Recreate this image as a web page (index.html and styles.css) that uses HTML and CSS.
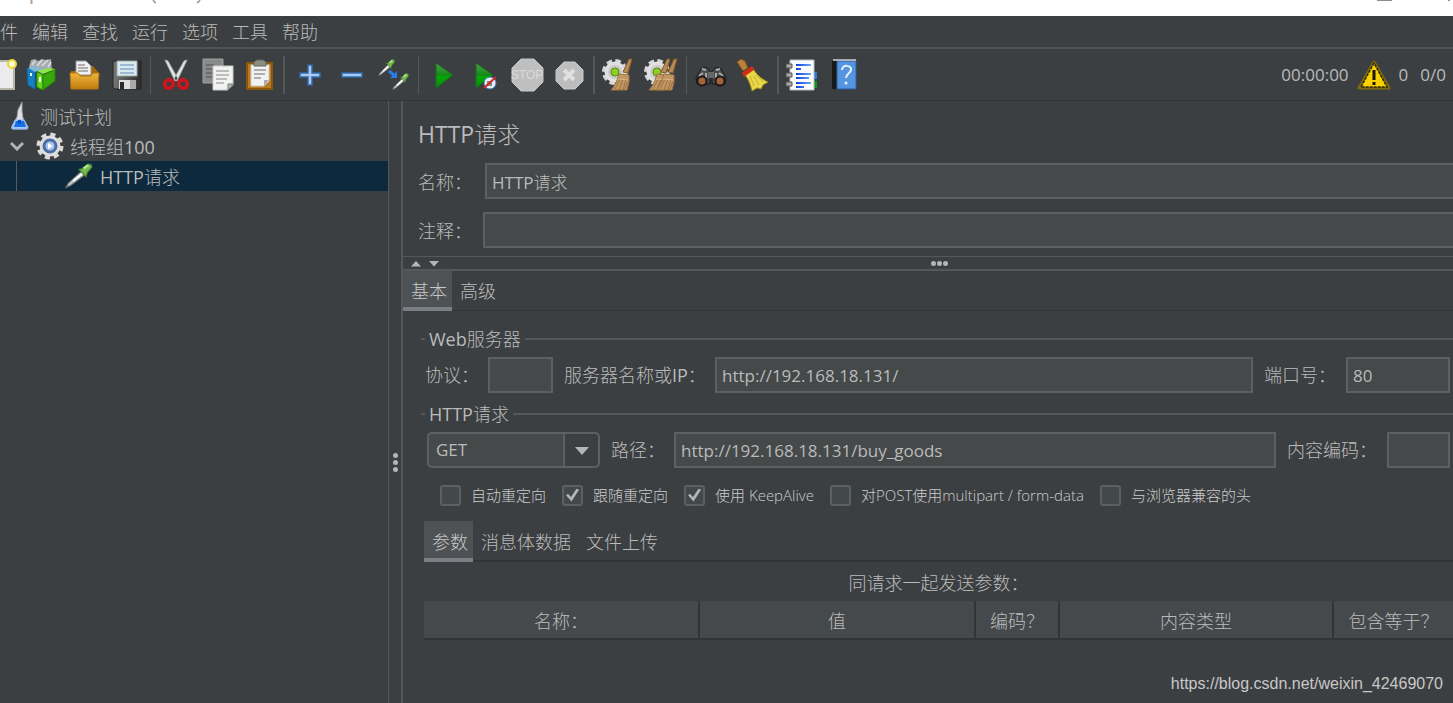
FILE: index.html
```
<!DOCTYPE html>
<html lang="zh-CN">
<head>
<meta charset="utf-8">
<title>HTTP请求</title>
<link rel="stylesheet" href="styles.css">
</head>
<body>
<svg class="defs" aria-hidden="true">
  <defs>
    <linearGradient id="gold" x1="0" y1="0" x2="0" y2="1"><stop offset="0" stop-color="#efb53c"/><stop offset="1" stop-color="#c17d0c"/></linearGradient>
    <linearGradient id="green" x1="0" y1="0" x2="0" y2="1"><stop offset="0" stop-color="#4fa04f"/><stop offset=".5" stop-color="#118a16"/><stop offset=".52" stop-color="#05a808"/><stop offset="1" stop-color="#088c0a"/></linearGradient>
    <linearGradient id="steel" x1="0" y1="0" x2="1" y2="0"><stop offset="0" stop-color="#777"/><stop offset="1" stop-color="#2c2c2c"/></linearGradient>
    <linearGradient id="line" x1="0" y1="0" x2="1" y2="0"><stop offset="0" stop-color="#0a3fd8"/><stop offset="1" stop-color="#69aaf8"/></linearGradient>
    <g id="page"><path d="M1 1h20v19l-5 5H1z" fill="#f2f2f0" stroke="#c9c9c6"/><path d="M4 6h13M4 10h13M4 14h11M4 18h8" stroke="#aaa" stroke-width="1.5"/><path d="M21 19h-5v6z" fill="#bbb" stroke="#777"/></g>
    <g id="dropper"><path d="M1 23l2-4L14 8l3 3L5 21z" fill="#c9c9c7" stroke="#777"/><path d="M7 17L15 9.500" stroke="#fff" stroke-width="2"/><path d="M12 6l3-1 4-4q4-1 4 3l-4 5-1 4z" fill="#76b94e" stroke="#47852d"/><path d="M16 5l4-3" stroke="#b8e59b" stroke-width="2"/></g>
    <g id="cog"><circle cx="13" cy="14" r="11" fill="none" stroke="#d6d6d6" stroke-width="4" stroke-dasharray="5.400 3.240"/><circle cx="13" cy="14" r="10.500" fill="#e0e0e0"/><circle cx="13" cy="14" r="7" fill="#cacaca"/><circle cx="13" cy="14" r="4" fill="#8fd022" stroke="#54850e"/></g>
    <g id="sweep"><path d="M21 13L27 0h3l-4 14z" fill="#b98b56" stroke="#80592b"/><path d="M17 15l10 1v7l-2 8H9c4-4 6-9 8-16z" fill="#c39761" stroke="#9c7340"/><path d="M18 20l-5 10M21 20l-4 11M24 20l-3 11M26 22l-3 8" stroke="#9a7342"/><path d="M16 20l10 1" stroke="#ddb883"/></g>
  </defs>
</svg>

<header class="titlebar" aria-hidden="true">
  <svg class="title-bits" width="220" height="5" viewBox="0 0 220 5"><path d="M31.500 0v4" stroke="#b9a18b" stroke-width="2"/><path d="M153 0q1 2 3 3M200 0q-1 2-3 3" fill="none" stroke="#999" stroke-width="1.500"/></svg>
  <svg class="window-bits" width="76" height="5" viewBox="0 0 76 5"><path d="M0 .5h15M71 .5h2" stroke="#8d8d8d"/></svg>
</header>

<nav class="menubar">
  <button>件</button><button>编辑</button><button>查找</button><button>运行</button><button>选项</button><button>工具</button><button>帮助</button>
</nav>

<div class="toolbar">
  <button class="tool first" aria-label="新建"><svg width="34" height="34" viewBox="0 0 34 34"><path d="M4 3h25v28H4z" fill="#ececec" stroke="#b7b7a9" stroke-width="2"/><circle cx="27" cy="6" r="4" fill="#fffbd0" stroke="#e8d63c" stroke-width="2"/></svg></button>
  <button class="tool" aria-label="模板"><svg width="34" height="34" viewBox="0 0 34 34"><path d="M5 9l2-7 4-1 3 2 4-2 4 1 5-1 1 12H8z" fill="#a6abad"/><path d="M8 7l3-4M13 8l5-6M18 8l6-6M24 9l3-5" stroke="#dcdedf" stroke-width="1.500"/><path d="M3 10l8 3v18l-7-4z" fill="#177fc4" stroke="#0868a8"/><path d="M4 10l6-2 8 3-7 3z" fill="#81b9dc"/><path d="M13 14l6 3v15l-6-3z" fill="#62d719" stroke="#2f9606"/><path d="M19 17l12-6v12l-12 9z" fill="#37a70a" stroke="#297d08"/><path d="M13 13l12-3 6 1-12 5z" fill="#8be54a"/><path d="M16 19v5M7 15v3" stroke="#e6ffff" stroke-width="2"/></svg></button>
  <button class="tool" aria-label="打开"><svg width="34" height="34" viewBox="0 0 34 34"><path d="M5 13h4l3-5h15l5 6v16H6z" fill="#a26a0a"/><path d="M10 17V3h10l5 5v9z" fill="#f0f0f0" stroke="#999"/><path d="M12 7h7M12 10h10M12 13h10" stroke="#999" stroke-width="1.500"/><path d="M4 15h8l2 3h11l2-3h6l-1 16H5z" fill="url(#gold)" stroke="#b47811"/></svg></button>
  <button class="tool" aria-label="保存"><svg width="34" height="34" viewBox="0 0 34 34"><path d="M5 3h28v28H7l-2-2z" fill="url(#steel)" stroke="#252525"/><path d="M9 3h20v15H9z" fill="#dce9f0" stroke="#9aa"/><path d="M12 7h14M12 11h14M12 15h14" stroke="#87abc9" stroke-width="1.500"/><path d="M11 22h17v9H11z" fill="#ddd"/><path d="M12 24h4v7h-4z" fill="#292929"/><path d="M22 22h6v9h-6z" fill="#aaa"/></svg></button>
  <span class="sep"></span>
  <button class="tool" aria-label="剪切"><svg width="34" height="34" viewBox="0 0 34 34"><path d="M7 2l3 1 10 18-3 2zM29 2l-3 1-10 18 3 2z" fill="#e5e5e2" stroke="#aaa"/><ellipse cx="11" cy="26" rx="4.500" ry="4" fill="none" stroke="#d41217" stroke-width="3.500" transform="rotate(-30 11 26)"/><ellipse cx="25" cy="26" rx="4.500" ry="4" fill="none" stroke="#d41217" stroke-width="3.500" transform="rotate(30 25 26)"/></svg></button>
  <button class="tool" aria-label="复制"><svg width="34" height="34" viewBox="0 0 34 34"><path d="M3 1h20v24H3z" fill="#898b8b" stroke="#a0a0a0"/><path d="M6 7h8M6 11h8M6 15h8M6 19h8" stroke="#666" stroke-width="1.500"/><use href="#page" x="12" y="7"/></svg></button>
  <button class="tool" aria-label="粘贴"><svg width="34" height="34" viewBox="0 0 34 34"><path d="M5 5h25v26H5z" fill="#b87a22" stroke="#8a550d" stroke-width="2"/><path d="M9 7h18v16l-5 5H9z" fill="#f2f2f0" stroke="#ccc"/><path d="M12 12h12M12 16h11M12 20h7" stroke="#999" stroke-width="1.500"/><path d="M12 8V4l3-2h6l3 2v4z" fill="#8b8e83" stroke="#646658"/><path d="M27 22h-5v6z" fill="#aaa"/></svg></button>
  <span class="sep thick"></span>
  <button class="tool" aria-label="添加"><svg width="34" height="34" viewBox="0 0 34 34"><path d="M16 7h4v8h8v4h-8v8h-4v-8H8v-4h8z" fill="#a9cbf0" stroke="#3268b0" stroke-width="1.500"/></svg></button>
  <button class="tool" aria-label="删除"><svg width="34" height="34" viewBox="0 0 34 34"><path d="M8 15h20v4H8z" fill="#a9cbf0" stroke="#3268b0" stroke-width="1.500"/></svg></button>
  <button class="tool" aria-label="切换"><svg width="34" height="34" viewBox="0 0 34 34"><use href="#dropper" transform="translate(2 1) scale(.72)"/><use href="#dropper" transform="translate(16 15) scale(.72)"/><path d="M13 13l6 5" stroke="#287be8" stroke-width="3"/><path d="M21 13v7h-7z" fill="#287be8"/></svg></button>
  <span class="sep"></span>
  <button class="tool" aria-label="启动"><svg width="34" height="34" viewBox="0 0 34 34"><path d="M10 5l17 12-17 13z" fill="url(#green)" stroke="#176b1a"/></svg></button>
  <button class="tool" aria-label="不停顿启动"><svg width="34" height="34" viewBox="0 0 34 34"><path d="M8 5l17 12L8 30z" fill="url(#green)" stroke="#176b1a"/><circle cx="22" cy="25" r="6" fill="#e8eef5" stroke="#347fc2"/><path d="M19 23h5v5h-5z" fill="#888"/><path d="M16 30L28 19" stroke="#da2422" stroke-width="2"/></svg></button>
  <button class="tool" aria-label="停止"><svg width="34" height="34" viewBox="0 0 34 34"><path d="M11 1h13l9 9v14l-9 9H11l-9-9V10z" fill="#bfbfbf" stroke="#c6c6c6"/><text x="17" y="21" text-anchor="middle" class="stop-text">STOP</text></svg></button>
  <button class="tool" aria-label="关闭"><svg width="34" height="34" viewBox="0 0 34 34"><path d="M12 4h11l8 8v11l-8 8H12l-8-8V12z" fill="#bdbdbd" stroke="#c9c9c9"/><path d="M12 12l10 10M22 12L12 22" stroke="#e0e0e0" stroke-width="4"/></svg></button>
  <span class="sep thick"></span>
  <button class="tool" aria-label="清除"><svg width="34" height="34" viewBox="0 0 34 34"><use href="#cog"/><use href="#sweep" y="1"/></svg></button>
  <button class="tool" aria-label="清除全部"><svg width="34" height="34" viewBox="0 0 34 34"><use href="#cog"/><use href="#sweep" x="-4" y="1"/><use href="#sweep" x="3" y="1"/></svg></button>
  <span class="sep"></span>
  <button class="tool" aria-label="搜索"><svg width="34" height="34" viewBox="0 0 34 34"><path d="M2 20l5-9 5-2 4 4v13H3zM32 20l-5-9-5-2-4 4v13h13z" fill="#4a4a4a" stroke="#171717"/><path d="M8 11l4 1M26 11l-4 1M5 18l4-3M29 18l-4-3M12 15v5M22 15v5" stroke="#aaa" stroke-width="2"/><path d="M14 14h6v6h-6z" fill="#666"/><circle cx="8" cy="23" r="4.500" fill="#a8623a" stroke="#1b1b1b" stroke-width="2"/><circle cx="26" cy="23" r="4.500" fill="#a8623a" stroke="#1b1b1b" stroke-width="2"/></svg></button>
  <button class="tool" aria-label="重置搜索"><svg width="34" height="34" viewBox="0 0 34 34"><path d="M1 4l4-3 4 2 3 7-5 3z" fill="#b9813b" stroke="#76501e"/><path d="M7 15l9-6c4 7 9 12 16 15l-5 3-2 4-4-1-5 3c-2-8-4-13-9-18z" fill="#e8d74b" stroke="#9e8b0d"/><path d="M14 18l4 10M18 18l5 9M20 17l7 7" stroke="#c6b32f"/><path d="M7 17l10-7" stroke="#d32b16" stroke-width="4"/></svg></button>
  <span class="sep thick"></span>
  <button class="tool" aria-label="函数助手"><svg width="34" height="34" viewBox="0 0 34 34"><path d="M26 14h5v7h-5z" fill="#2b79dc"/><path d="M26 23h5v7h-5z" fill="#159113"/><path d="M4 2h24v30H4z" fill="#fbfbfb" stroke="#bbb"/><path d="M10 6h15v2H10zM10 10h5v2h-5zM10 15h15v2H10zM10 19h13v2H10zM10 24h15v2H10zM10 28h8v2h-8z" fill="url(#line)"/><path d="M0 6h6v4H0zM0 15h6v4H0zM0 24h6v4H0z" fill="#aaa" stroke="#555"/></svg></button>
  <button class="tool" aria-label="帮助"><svg width="34" height="34" viewBox="0 0 34 34"><path d="M4 3l3-2h21v30H4z" fill="#191919"/><path d="M9 3h19v28H9z" fill="#5595e0" stroke="#2b5fa4"/><path d="M5 2h23" stroke="#ddd" stroke-width="1.500"/><path d="M14 12c0-6 10-5 9 0-1 4-5 4-5 8" fill="none" stroke="#e7f3ff" stroke-width="2"/><circle cx="18" cy="25" r="1.500" fill="#e7f3ff"/></svg></button>
  <div class="status">
    <span>00:00:00</span>
    <button class="warn" aria-label="警告"><svg width="34" height="32" viewBox="0 0 34 32"><path d="M17 3L2 29h30z" fill="#f7ca00" stroke="#7d6a10" stroke-width="3" stroke-linejoin="round"/><path d="M17 4L4 28h26z" fill="#f9d000" stroke="#2a270c" stroke-width="1.500" stroke-dasharray="3 1"/><path d="M17 11v10M17 23v3" stroke="#191700" stroke-width="3"/></svg></button>
    <span>0</span><span class="threads">0/0</span>
  </div>
</div>

<main class="workspace">
  <aside class="tree">
    <div class="node root"><svg width="22" height="28" viewBox="0 0 22 28"><path d="M9 8l4-8v9l1 7 5 9q0 2-2 2H4q-2 0-1-3l5-9z" fill="#dedfe3" stroke="#9a9ca3"/><path d="M6 18h9l4 8q0 1-2 1H4q-2 0-1-2z" fill="#a9c8f4" stroke="#8fb6ea"/><path d="M7 19h8l2 6H5z" fill="#1670ea"/><path d="M9 18h3v4H9z" fill="#0755bb"/></svg><span>测试计划</span></div>
    <div class="node group"><svg class="chevron" width="14" height="10" viewBox="0 0 14 10"><path d="M1 2l6 6 6-6" fill="none" stroke="#b1b3b5" stroke-width="3"/></svg><svg width="28" height="28" viewBox="0 0 28 28"><circle cx="14" cy="14" r="11.500" fill="none" stroke="#dadada" stroke-width="4" stroke-dasharray="5 4.030"/><circle cx="14" cy="14" r="10.500" fill="#dedede"/><circle cx="14" cy="14" r="6" fill="#a9c3ea" stroke="#4a6da8" stroke-width="3"/><path d="M12 11l5 3-5 3z" fill="#fff"/></svg><span>线程组100</span></div>
    <div class="node request"><svg width="28" height="28" viewBox="0 0 24 24"><use href="#dropper" transform="translate(0 1) scale(1 .9)"/></svg><span>HTTP请求</span></div>
  </aside>
  <div class="split"><i></i><i></i><i></i></div>

  <section class="editor">
    <div class="heading">
      <h1>HTTP请求</h1>
      <div class="field name"><label for="name">名称：</label><input id="name" type="text" value="HTTP请求"></div>
      <div class="field comment"><label for="comment">注释：</label><input id="comment" type="text"></div>
    </div>
    <div class="hsplit">
      <svg width="28" height="7" viewBox="0 0 28 7"><path d="M0 6.500h10L5 1zM18 1h10l-5 5.500z" fill="#b3b5b6"/></svg>
      <div class="dots"><i></i><i></i><i></i></div>
    </div>
    <div class="tabs main-tabs"><button class="active">基本</button><button>高级</button></div>

    <div class="content">
      <fieldset>
        <legend>Web服务器</legend>
        <div class="line server">
          <label class="short" for="protocol">协议：</label><input class="protocol" id="protocol" type="text">
          <label class="host" for="host">服务器名称或IP：</label><input class="grow" id="host" type="text" value="http://192.168.18.131/">
          <label class="port-label" for="port">端口号：</label><input class="port" id="port" type="text" value="80">
        </div>
      </fieldset>
      <fieldset class="second">
        <legend>HTTP请求</legend>
        <div class="line">
          <div class="combo"><select aria-label="方法"><option>GET</option></select><svg width="14" height="8" viewBox="0 0 14 8"><path d="M0 0h14L7 8z" fill="#b3b5b6"/></svg></div>
          <label class="short" for="path">路径：</label><input class="grow" id="path" type="text" value="http://192.168.18.131/buy_goods">
          <label class="enc-label" for="encoding">内容编码：</label><input class="encoding" id="encoding" type="text">
        </div>
        <div class="checks">
          <label><input type="checkbox"><span>自动重定向</span></label>
          <label><input type="checkbox" checked><span>跟随重定向</span></label>
          <label><input type="checkbox" checked><span>使用 KeepAlive</span></label>
          <label><input type="checkbox"><span>对POST使用multipart / form-data</span></label>
          <label><input type="checkbox"><span>与浏览器兼容的头</span></label>
        </div>
      </fieldset>
      <div class="params">
        <div class="tabs"><button class="active">参数</button><button>消息体数据</button><button>文件上传</button></div>
        <table>
          <caption>同请求一起发送参数：</caption>
          <colgroup><col class="c-name"><col class="c-value"><col class="c-encode"><col class="c-type"><col class="c-equals"></colgroup>
          <thead><tr><th>名称：</th><th>值</th><th>编码？</th><th>内容类型</th><th>包含等于？</th></tr></thead>
        </table>
      </div>
    </div>
    <footer class="credit">https://blog.csdn.net/weixin_42469070</footer>
  </section>
</main>
</body>
</html>
```
FILE: styles.css
```
* { box-sizing: border-box; }
body {
  margin: 0;
  min-height: 100vh;
  display: flex;
  flex-direction: column;
  overflow: hidden;
  background: #3c3f41;
  color: #bbbbbb;
  font: 400 18px/24px "Open Sans", "Noto Sans CJK SC Light", "Noto Sans CJK SC", sans-serif;
}
button, input, select { font: inherit; color: inherit; margin: 0; }
button { padding: 0; border: 0; background: none; white-space: nowrap; }
svg { display: block; flex: none; }
.defs { position: absolute; width: 0; height: 0; }

.titlebar { display: flex; justify-content: space-between; height: 16px; background: #fff; }
.menubar { display: flex; gap: 14px; height: 33px; border-bottom: 2px solid #515456; }

.toolbar { display: flex; align-items: center; height: 52px; border-bottom: 1px solid #323537; }
.tool { display: flex; justify-content: center; width: 42px; flex: none; }
.tool.first { width: 20px; justify-content: flex-end; padding-right: 1px; overflow: hidden; }
.sep { display: flex; justify-content: center; flex: none; width: 8px; height: 38px; }
.sep::before { content: ""; width: 1px; background: #55585a; }
.sep.thick::before { width: 2px; }
.stop-text { font: 400 12px "Liberation Sans", sans-serif; fill: #dadada; }
.status { display: flex; align-items: center; margin-left: auto; padding-right: 7px; gap: 8px; font-size: 17px; }
.threads { margin-left: 4px; }

.workspace { display: flex; flex: 1; }
.tree { width: 389px; flex: none; border-right: 1px solid #555859; }
.node { display: flex; align-items: center; height: 30px; }
.node span { padding-top: 2px; }
.root { padding-left: 9px; gap: 9px; }
.group { padding-left: 10px; gap: 6px; }
.group .chevron { margin-right: 6px; }
.request {
  padding-left: 65px;
  gap: 7px;
  background: linear-gradient(#555b60, #555b60) 16px 0 / 1px 100% no-repeat #0d293e;
}
.split { display: flex; flex-direction: column; justify-content: center; align-items: center; gap: 2px; width: 12px; flex: none; padding-top: 120px; }
.split i, .dots i { width: 5px; height: 5px; border-radius: 50%; background: #b3b5b6; }

.editor { display: flex; flex-direction: column; flex: 1; min-width: 0; border-left: 2px solid #555859; }
.heading { padding: 18px 0 8px 15px; border-bottom: 1px solid #555859; }
h1 { margin: 0 0 14px; font-size: 23px; line-height: 30px; font-weight: 400; }
.field { display: flex; align-items: center; }
.field label { width: 67px; flex: none; padding-top: 2px; }
.field.comment label { width: 65px; }
.field.comment { margin-top: 13px; }
input[type="text"] {
  width: 0;
  height: 36px;
  padding: 0 5px;
  border: 2px solid #5d6061;
  border-radius: 0;
  background: #45494a;
  font-size: 17px;
}
.field input[type="text"] { flex: 1; border-right: 0; }
.hsplit { display: grid; grid-template-columns: 1fr auto 1fr; align-items: center; height: 14px; margin-right: -14px; padding-left: 8px; border-bottom: 2px solid #555859; }
.dots { display: flex; gap: 1px; }

.tabs { display: flex; height: 40px; border-bottom: 1px solid #323537; }
.tabs button { height: 40px; padding: 0 7px 0 8px; }
.tabs .active { padding: 4px 5px 0 8px; border-bottom: 4px solid #7a7e85; background: #4e5254; color: #c8c8c8; }

.content { padding: 15px 0 0 18px; }
fieldset { margin: 0; padding: 0 3px 0 3px; border: 0; border-top: 2px solid #555859; min-width: 0; }
legend { margin-left: 1px; padding: 0 4px; line-height: 26px; }
fieldset.second { margin-top: 8px; }
.line { display: flex; align-items: center; gap: 11px; margin-top: 5px; white-space: nowrap; }
.line label { flex: none; }
.server { margin-left: 1px; }
.short { width: 52px; }
.host { width: 140px; }
.port-label { width: 71px; }
.enc-label { width: 89px; }
.line .grow { flex: 1; }
.line .protocol { width: 65px; }
.line .port { width: 104px; }
.line .encoding { width: 63px; }
.combo { position: relative; width: 173px; margin-left: 3px; }
.combo select {
  display: block;
  width: 100%;
  height: 36px;
  padding: 0 7px;
  appearance: none;
  border: 2px solid #5d6061;
  border-radius: 5px;
  background: linear-gradient(to left, #3c3f41 33px, #5d6061 33px, #5d6061 35px, #45494a 35px);
  font-size: 17px;
}
.combo svg { position: absolute; right: 11px; top: 15px; pointer-events: none; }
.checks { display: flex; gap: 16px; padding: 16px 0 0 16px; font-size: 15px; font-weight: 300; line-height: 22px; color: #cccccc; white-space: nowrap; }
.checks label { display: flex; align-items: center; gap: 10px; }
.checks input {
  appearance: none;
  width: 21px;
  height: 21px;
  display: grid;
  place-items: center;
  border: 2px solid #5d6061;
  border-radius: 3px;
  background: #43494a;
}
.checks input:checked::before {
  content: "";
  width: 13px;
  height: 13px;
  background: #b3b5b6;
  clip-path: polygon(0 52%, 15% 40%, 38% 66%, 82% 0, 100% 10%, 42% 100%);
}

.params { margin: 15px 0 0 3px; }
.params .tabs { height: 41px; border-bottom-width: 2px; }
.params .tabs button { height: 41px; }
table { width: 100%; border-collapse: separate; border-spacing: 0; table-layout: fixed; }
caption { height: 39px; padding-top: 9px; }
th { height: 39px; padding: 2px 0 0; border-right: 2px solid #323537; border-bottom: 2px solid #323537; background: #45494b; font-weight: 400; }
th:last-child { border-right: 0; }
.c-name, .c-value { width: 276px; }
.c-encode { width: 84px; }
.c-type { width: 274px; }
.credit { margin-top: auto; padding: 0 10px 8px; text-align: right; font: 16px/22px "Liberation Sans", sans-serif; color: #c8c8c8; }
```
